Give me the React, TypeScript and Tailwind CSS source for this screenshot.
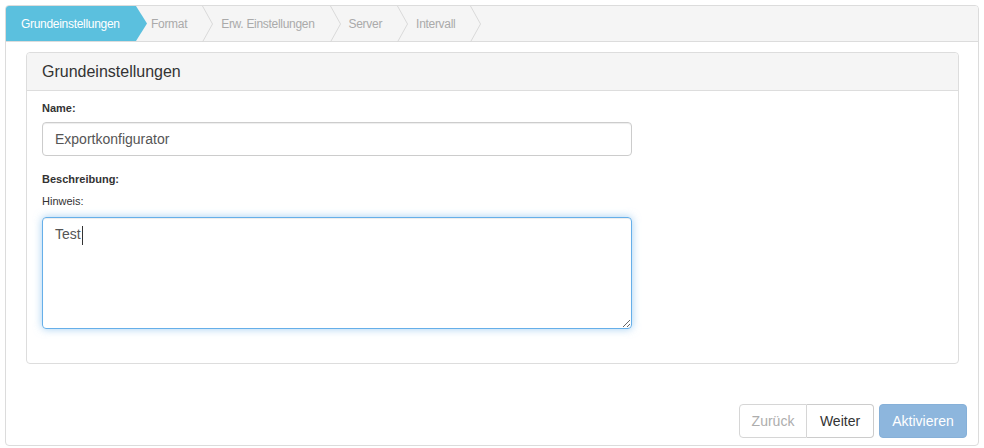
import React from 'react'

const steps = ['Format', 'Erw. Einstellungen', 'Server', 'Intervall']

function Chevron() {
  return (
    <svg width="11" height="36" viewBox="0 0 11 36" className="shrink-0">
      <polyline points="0.5,0 10.5,18 0.5,36" fill="none" stroke="#d9d9d9" strokeWidth="1" />
    </svg>
  )
}

export default function App() {
  return (
    <div className="p-[5px] font-['Liberation_Sans',Arial,sans-serif] text-[#333]">
      <div className="border border-[#dcdcdc] rounded-[4px] overflow-hidden bg-white">
        {/* Steps */}
        <div className="h-[36px] bg-[#f5f5f5] border-b border-[#dcdcdc] flex items-stretch text-[12px] tracking-[-0.3px]">
          <div className="flex items-center bg-[#5bc0de] text-white pl-[15px] w-[141px] [clip-path:polygon(0_0,130px_0,141px_50%,130px_100%,0_100%)]">
            Grundeinstellungen
          </div>
          {steps.map((s, i) => (
            <div key={s} className={`flex items-stretch ${i === 0 ? 'pl-[4px]' : 'pl-[8px]'}`}>
              <span className="flex items-center text-[#aaa] pr-[15px]">{s}</span>
              <Chevron />
            </div>
          ))}
        </div>

        {/* Panel */}
        <div className="mt-[10px] ml-[20px] mr-[19px] border border-[#ddd] rounded-[4px]">
          <div className="h-[38px] bg-[#f5f5f5] border-b border-[#ddd] flex items-center px-[15px] text-[16px] text-[#333] rounded-t-[4px]">
            Grundeinstellungen
          </div>
          <div className="px-[15px] pt-[10px] pb-[34px]">
            <label className="block text-[11px] font-bold leading-[15px] text-[#333] mb-[6px]">Name:</label>
            <input
              readOnly
              value="Exportkonfigurator"
              className="block w-[590px] h-[34px] border border-[#ccc] rounded-[4px] px-[12px] text-[14px] text-[#555] outline-none shadow-[inset_0_1px_1px_rgba(0,0,0,0.075)]"
            />
            <label className="block text-[11px] font-bold leading-[15px] text-[#333] mt-[16px]">Beschreibung:</label>
            <div className="text-[11px] leading-[15px] text-[#333] mt-[7px] mb-[8px]">Hinweis:</div>
            <div className="relative w-[590px]">
              <textarea
                readOnly
                defaultValue="Test"
                className="block w-[590px] h-[112px] border border-[#66afe9] rounded-[4px] px-[12px] py-[6px] text-[14px] leading-[20px] text-[#555] outline-none shadow-[inset_0_1px_1px_rgba(0,0,0,0.075),0_0_8px_rgba(102,175,233,0.6)]"
              />
              <span className="absolute left-[40px] top-[9px] w-px h-[19px] bg-[#333]" />
            </div>
          </div>
        </div>

        {/* Buttons */}
        <div className="flex justify-end mt-[40px] mr-[11px] mb-[7px] text-[14px]">
          <div className="flex">
            <button className="h-[34px] w-[68px] border border-[#ccc] rounded-l-[4px] text-[#999] bg-white opacity-80">Zurück</button>
            <button className="h-[34px] w-[67px] border border-l-0 border-[#ccc] rounded-r-[4px] text-[#333] bg-white">Weiter</button>
          </div>
          <button className="ml-[5px] h-[34px] w-[88px] rounded-[4px] bg-[#8db6dd] border border-[#86b0d8] text-white">Aktivieren</button>
        </div>
      </div>
    </div>
  )
}
